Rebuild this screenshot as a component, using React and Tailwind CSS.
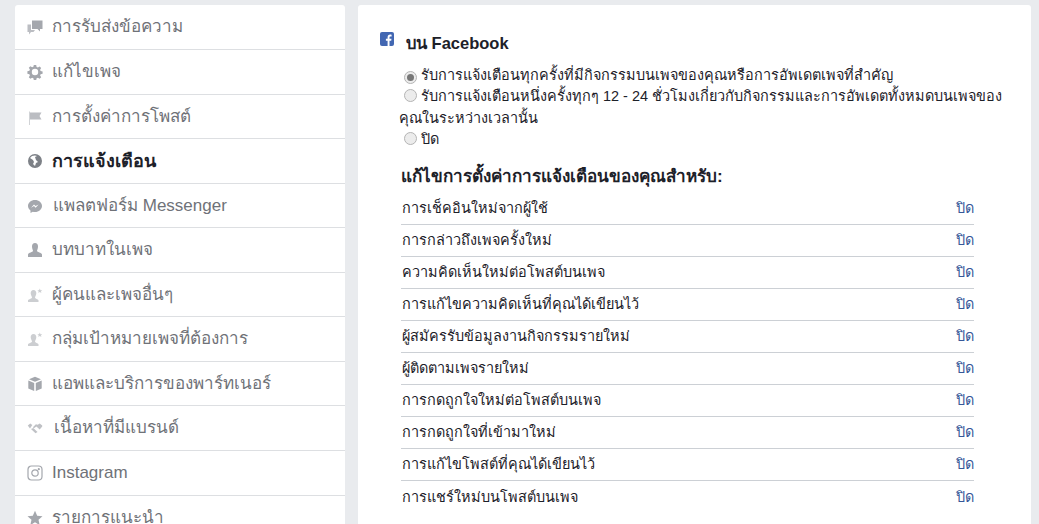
import React from 'react';

const gray = '#a4a7ad';

function Svg({ children, size = 16, className = '' }) {
  return (
    <svg width={size} height={size} viewBox="0 0 16 16" fill={gray} className={className}>
      {children}
    </svg>
  );
}

const icons = {
  chat: (
    <Svg>
      <path d="M5 1.500h10.500v8.500H13v2.500L10.500 10H5z" />
      <path d="M.5 5.500H4V11h4l-1.500 2H4l-2 2.500V13H.5z" opacity="0.75" />
    </Svg>
  ),
  gear: (
    <Svg>
      <path fillRule="evenodd" d="M6.800 1h2.400l.4 2 1.300.5 1.700-1.100 1.600 1.600-1.100 1.700.5 1.300 2 .4v2.400l-2 .4-.5 1.300 1.100 1.700-1.600 1.600-1.700-1.100-1.300.5-.4 2H6.800l-.4-2-1.300-.5-1.700 1.100-1.600-1.600 1.100-1.700-.5-1.300-2-.4V7.200l2-.4.5-1.300-1.100-1.700 1.600-1.600 1.700 1.100 1.300-.5zM8 4.800a3.200 3.200 0 1 0 0 6.400 3.200 3.200 0 0 0 0-6.400z" />
    </Svg>
  ),
  flag: (
    <Svg>
      <path d="M2 2.500h1V16H2z" opacity="0.5" />
      <path d="M3 3.500h11.500l-2 3.500 2 3.500H3z" opacity="0.75" />
    </Svg>
  ),
  globe: (
    <Svg>
      <path fill="#7d8187" fillRule="evenodd" d="M8 1a7 7 0 1 1 0 14A7 7 0 0 1 8 1zM3 5l3 2 1 2-1 2 2 2 1-3 2-1-2-2-1-3 2-1-2-.6-3 .6z" />
    </Svg>
  ),
  messenger: (
    <Svg>
      <path d="M8 2c3.900 0 7 2.700 7 6s-3.100 6-7 6c-.8 0-1.500-.1-2.200-.3L3.500 15v-2.500C2 11.400 1 9.800 1 8c0-3.300 3.100-6 7-6z" />
      <path fill="#fff" d="M4 9.700l3-3.200 1.600 1.600 3-1.600-3 3.200L7 8.100z" />
    </Svg>
  ),
  person: (
    <Svg>
      <path d="M8 1c2 0 3 1.500 3 3.500S10 8 10 9c0 1 4.500 1.500 5 3.500V15H1v-2.500C1.500 10.500 6 10 6 9S5 6.500 5 4.500 6 1 8 1z" />
    </Svg>
  ),
  personStar: (
    <Svg>
      <g opacity="0.55">
        <path d="M6.500 3c1.900 0 2.800 1.400 2.800 3.200S8 9.500 8 10.700c0 .9 3 1.300 3.500 2.600V15H1v-1.700c.5-1.300 4-1.700 4-2.600C5 9.500 3.700 8 3.700 6.200S4.600 3 6.500 3z" />
        <path d="M12.800 1.500l.7 1.700 1.700.1-1.300 1.100.5 1.700-1.600-1-1.600 1 .5-1.700-1.300-1.100 1.700-.1z" />
      </g>
    </Svg>
  ),
  cube: (
    <Svg>
      <path d="M8 .8l6 2.500L8 5.800 2 3.300z" />
      <path d="M1.300 4.500L7.200 7.100v8L1.300 12.500z" />
      <path d="M14.700 4.500L8.800 7.100v8l5.900-2.600z" />
    </Svg>
  ),
  hands: (
    <Svg>
      <g opacity="0.7">
        <path d="M.8 5.500l2.500-2 2 1.500-2.300 3.500z" />
        <path d="M15.200 5.500l-2.500-2-2 1.200-1.800-.4-3 3 1 1 2.500-1.800 3.300 3 2.500-3z" />
        <path d="M4 9l4.500 4.200 2-1.300L6.300 8z" />
      </g>
    </Svg>
  ),
  instagram: (
    <svg width="16" height="16" viewBox="0 0 16 16" fill="none" stroke={gray} strokeWidth="1.200">
      <rect x="1" y="1" width="14" height="14" rx="3.500" />
      <circle cx="8" cy="8" r="3.200" />
      <circle cx="11.800" cy="4.200" r="0.500" fill={gray} />
    </svg>
  ),
  star: (
    <Svg>
      <path d="M8 .8l2.200 4.900 5.300.6-4 3.500 1.200 5.300L8 12.300l-4.700 2.800 1.200-5.300-4-3.500 5.300-.6z" />
    </Svg>
  ),
};

const menu = [
  { icon: 'chat', label: 'การรับส่งข้อความ', h: 'h-[45px]' },
  { icon: 'gear', label: 'แก้ไขเพจ', h: 'h-[45px]' },
  { icon: 'flag', label: 'การตั้งค่าการโพสต์', h: 'h-[44px]' },
  { icon: 'globe', label: 'การแจ้งเตือน', h: 'h-[45px]', active: true },
  { icon: 'messenger', label: 'แพลตฟอร์ม Messenger', h: 'h-[44px]', gap: 'gap-[10px]' },
  { icon: 'person', label: 'บทบาทในเพจ', h: 'h-[45px]' },
  { icon: 'personStar', label: 'ผู้คนและเพจอื่นๆ', h: 'h-[44px]' },
  { icon: 'personStar', label: 'กลุ่มเป้าหมายเพจที่ต้องการ', h: 'h-[45px]' },
  { icon: 'cube', label: 'แอพและบริการของพาร์ทเนอร์', h: 'h-[44px]' },
  { icon: 'hands', label: 'เนื้อหาที่มีแบรนด์', h: 'h-[45px]', gap: 'gap-[11px]' },
  { icon: 'instagram', label: 'Instagram', h: 'h-[45px]' },
  { icon: 'star', label: 'รายการแนะนำ', h: 'h-[44px]' },
];

const settings = [
  'การเช็คอินใหม่จากผู้ใช้',
  'การกล่าวถึงเพจครั้งใหม่',
  'ความคิดเห็นใหม่ต่อโพสต์บนเพจ',
  'การแก้ไขความคิดเห็นที่คุณได้เขียนไว้',
  'ผู้สมัครรับข้อมูลงานกิจกรรมรายใหม่',
  'ผู้ติดตามเพจรายใหม่',
  'การกดถูกใจใหม่ต่อโพสต์บนเพจ',
  'การกดถูกใจที่เข้ามาใหม่',
  'การแก้ไขโพสต์ที่คุณได้เขียนไว้',
  'การแชร์ใหม่บนโพสต์บนเพจ',
];

function Radio({ checked }) {
  return (
    <span className="inline-flex items-center justify-center w-[13px] h-[13px] rounded-full border border-[#b4b4b4] bg-[#ececec] align-[-1px] mr-[4px] ml-[5px]">
      {checked && <span className="block w-[7px] h-[7px] rounded-full bg-[#777777]"></span>}
    </span>
  );
}

export default function App() {
  return (
    <div className="h-[524px] overflow-hidden bg-[#e9ebee] flex items-start gap-[13px] pl-[15px] pr-2 pt-[5px] font-['Liberation_Sans','Noto_Sans',sans-serif]">
      {/* Sidebar */}
      <div className="w-[330px] shrink-0 bg-white rounded-t-[3px]">
        {menu.map((item, i) => (
          <div
            key={i}
            className={`flex items-center ${item.gap || 'gap-[9px]'} pl-[12px] border-b border-[#dddfe2] ${item.h} ${item.active ? 'text-[18px] font-bold text-[#1d2129]' : 'text-[17px] text-[#6f7278]'}`}
          >
            {icons[item.icon]}
            <span>{item.label}</span>
          </div>
        ))}
      </div>

      {/* Main panel */}
      <div className="flex-1 h-[540px] bg-white rounded-t-[3px] pt-[26px] pl-[22px] pr-[20px]">
        <div className="flex items-start">
          <svg width="14" height="14" viewBox="0 0 14 14" className="shrink-0 mt-px">
            <rect width="14" height="14" rx="2" fill="#4267b2" />
            <path fill="#fff" d="M9.500 14V8.700h1.700l.3-2H9.500V5.500c0-.6.2-1 1-1h1.100V2.700C11.300 2.700 10.800 2.600 10.100 2.600 8.600 2.600 7.600 3.500 7.600 5.200v1.500H5.900v2h1.700V14z" />
          </svg>
          <span className="ml-[12px] mt-[2px] text-[16.500px] leading-[20px] font-bold text-[#1d2129]">บน Facebook</span>
        </div>

        <div className="mt-[12px] pl-[19px] text-[14.450px] leading-[21.400px] text-[#1d2129]">
          <div>
            <Radio checked />
            รับการแจ้งเตือนทุกครั้งที่มีกิจกรรมบนเพจของคุณหรือการอัพเดตเพจที่สำคัญ
          </div>
          <div>
            <Radio />
            รับการแจ้งเตือนหนึ่งครั้งทุกๆ 12 - 24 ชั่วโมงเกี่ยวกับกิจกรรมและการอัพเดตทั้งหมดบนเพจของคุณในระหว่างเวลานั้น
          </div>
          <div>
            <Radio />
            ปิด
          </div>
        </div>

        <div className="mt-[16px] pl-[21px] text-[17.100px] leading-[20px] font-bold text-[#1d2129]">
          แก้ไขการตั้งค่าการแจ้งเตือนของคุณสำหรับ:
        </div>

        <div className="mt-[6px] ml-[21px] mr-[37px]">
          {settings.map((label, i) => (
            <div
              key={i}
              className={`flex items-center justify-between h-[32px] pt-[2px] text-[14.450px] text-[#1d2129] ${i < settings.length - 1 ? 'border-b border-[#ccd0d5]' : ''}`}
            >
              <span className="pl-[1px]">{label}</span>
              <span className="text-[#365899]">ปิด</span>
            </div>
          ))}
        </div>
      </div>
    </div>
  );
}
